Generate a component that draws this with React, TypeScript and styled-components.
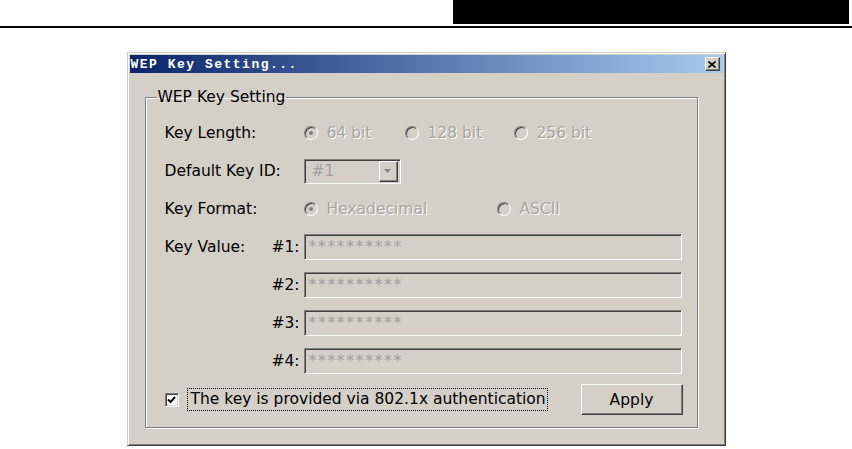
import { Fragment } from 'react';
import styled, { createGlobalStyle, css } from 'styled-components';

const GlobalStyle = createGlobalStyle`
  body {
    margin: 0;
    background: #fff;
  }
`;

const sunken = css`
  box-sizing: border-box;
  border: 1px solid;
  border-color: #808080 #fff #fff #808080;
  box-shadow: inset 1px 1px #404040, inset -1px -1px #d4d0c8;
`;

const raised = css`
  box-sizing: border-box;
  border: 1px solid;
  border-color: #fff #404040 #404040 #fff;
  box-shadow: inset -1px -1px #808080;
  background: #d4d0c8;
`;

const Page = styled.div`
  width: 852px;
  height: 449px;
  overflow: hidden;
  font-family: 'DejaVu Sans', sans-serif;
  font-size: 15.5px;
`;

const Header = styled.div`
  height: 24px;
  display: flex;
  justify-content: flex-end;
  padding-right: 3px;
`;

const BlackTab = styled.div`
  width: 396px;
  background: #000;
`;

const Rule = styled.div`
  margin-top: 2px;
  height: 2px;
  background: #000;
`;

const Stage = styled.div`
  display: flex;
  justify-content: center;
  padding-top: 24px;
`;

const Dialog = styled.div`
  width: 599px;
  height: 394px;
  box-sizing: border-box;
  background: #d4d0c8;
  border: 1px solid;
  border-color: #d4d0c8 #404040 #404040 #d4d0c8;
  box-shadow: inset 1px 1px #fff, inset -1px -1px #808080;
  padding: 2px;
  display: flex;
  flex-direction: column;
`;

const TitleBar = styled.div`
  height: 18px;
  flex: none;
  display: flex;
  align-items: center;
  justify-content: space-between;
  padding: 0 3px 0 1px;
  background: linear-gradient(90deg, #0a246a 0%, #a6caf0 100%);
`;

const Title = styled.span`
  font-family: 'Liberation Mono', monospace;
  font-weight: bold;
  font-size: 13px;
  letter-spacing: 1.5px;
  color: #fff;
`;

const CloseButton = styled.div`
  ${raised};
  width: 15px;
  height: 14px;
  display: flex;
  align-items: center;
  justify-content: center;
`;

const Body = styled.div`
  padding: 15px 25px 0 15px;
`;

const GroupBox = styled.fieldset`
  margin: 0;
  width: 553px;
  box-sizing: border-box;
  padding: 8px 14px 12px 19px;
  border: 1px solid #808080;
  box-shadow: inset 1px 1px #fff, 1px 1px #fff;
`;

const Legend = styled.legend`
  margin-left: -8px;
  padding: 0 1px;
  line-height: 18px;
  color: #000;
`;

const Form = styled.div`
  display: grid;
  grid-template-columns: 102px 37px 378px;
  grid-auto-rows: 38px;
  align-items: center;
`;

const Label = styled.span<{ $span?: boolean }>`
  grid-column: ${(p) => (p.$span ? 'span 2' : 'auto')};
  color: #000;
  white-space: nowrap;
`;

const Hash = styled.span`
  grid-column: 2;
  text-align: right;
  padding-right: 4px;
  color: #000;
`;

const Options = styled.div`
  grid-column: 3;
  display: flex;
  align-items: center;
`;

const RadioItem = styled.div<{ $width?: number }>`
  display: flex;
  align-items: center;
  gap: 9px;
  width: ${(p) => (p.$width ? `${p.$width}px` : 'auto')};
  flex: none;
`;

const RadioDot = styled.span<{ $checked?: boolean }>`
  ${sunken};
  width: 14px;
  height: 14px;
  border-radius: 50%;
  display: flex;
  align-items: center;
  justify-content: center;
  &::after {
    content: '';
    width: 4px;
    height: 4px;
    border-radius: 50%;
    background: ${(p) => (p.$checked ? '#808080' : 'transparent')};
  }
`;

const Disabled = styled.span`
  color: #a8a69f;
  text-shadow: 1px 1px 0 #fff;
  white-space: nowrap;
`;

const Combo = styled.div`
  ${sunken};
  grid-column: 3;
  width: 97px;
  height: 25px;
  display: flex;
  align-items: center;
  justify-content: space-between;
  padding: 2px 2px 2px 7px;
`;

const ComboText = styled.span`
  color: #a0a0a0;
`;

const ComboArrow = styled.div`
  ${raised};
  width: 19px;
  height: 21px;
  display: flex;
  align-items: center;
  justify-content: center;
`;

const Field = styled.div`
  ${sunken};
  grid-column: 3;
  width: 378px;
  height: 26px;
  display: flex;
  align-items: center;
  padding-left: 4px;
  color: #a0a0a0;
  letter-spacing: 1.7px;
`;

const Footer = styled.div`
  margin-top: 4px;
  display: flex;
  align-items: center;
  justify-content: space-between;
`;

const CheckRow = styled.div`
  display: flex;
  align-items: center;
`;

const CheckBox = styled.span`
  ${sunken};
  width: 14px;
  height: 14px;
  background: #fff;
  display: flex;
  align-items: center;
  justify-content: center;
`;

const CheckLabel = styled.span`
  margin-left: 9px;
  padding: 1px 1px 2px 3px;
  outline: 1px dotted #000;
  color: #000;
  white-space: nowrap;
`;

const ApplyButton = styled.div`
  ${raised};
  width: 102px;
  height: 31px;
  display: flex;
  align-items: center;
  justify-content: center;
  color: #000;
`;

function Radio({ label, checked, width }: { label: string; checked?: boolean; width?: number }) {
  return (
    <RadioItem $width={width}>
      <RadioDot $checked={checked} />
      <Disabled>{label}</Disabled>
    </RadioItem>
  );
}

const keys = ['#1:', '#2:', '#3:', '#4:'];

export default function App() {
  return (
    <Page>
      <GlobalStyle />
      <Header>
        <BlackTab />
      </Header>
      <Rule />
      <Stage>
        <Dialog>
          <TitleBar>
            <Title>WEP Key Setting...</Title>
            <CloseButton>
              <svg width="8" height="7" viewBox="0 0 8 7">
                <path d="M0.5 0.5 L7.5 6.5 M7.5 0.5 L0.5 6.5" stroke="#000" strokeWidth="1.6" />
              </svg>
            </CloseButton>
          </TitleBar>
          <Body>
            <GroupBox>
              <Legend>WEP Key Setting</Legend>
              <Form>
                <Label $span>Key Length:</Label>
                <Options>
                  <Radio label="64 bit" checked width={101} />
                  <Radio label="128 bit" width={109} />
                  <Radio label="256 bit" />
                </Options>

                <Label $span>Default Key ID:</Label>
                <Combo>
                  <ComboText>#1</ComboText>
                  <ComboArrow>
                    <svg width="8" height="5" viewBox="0 0 8 5">
                      <path d="M0 0 H7 L3.5 4 Z" fill="#808080" />
                    </svg>
                  </ComboArrow>
                </Combo>

                <Label $span>Key Format:</Label>
                <Options>
                  <Radio label="Hexadecimal" checked width={193} />
                  <Radio label="ASCII" />
                </Options>

                {keys.map((k, i) => (
                  <Fragment key={k}>
                    {i === 0 ? <Label>Key Value:</Label> : null}
                    <Hash>{k}</Hash>
                    <Field>**********</Field>
                  </Fragment>
                ))}
              </Form>
              <Footer>
                <CheckRow>
                  <CheckBox>
                    <svg width="9" height="8" viewBox="0 0 9 8">
                      <path d="M1 3.5 L3.5 6 L8 1" stroke="#000" strokeWidth="2" fill="none" />
                    </svg>
                  </CheckBox>
                  <CheckLabel>The key is provided via 802.1x authentication</CheckLabel>
                </CheckRow>
                <ApplyButton>Apply</ApplyButton>
              </Footer>
            </GroupBox>
          </Body>
        </Dialog>
      </Stage>
    </Page>
  );
}
